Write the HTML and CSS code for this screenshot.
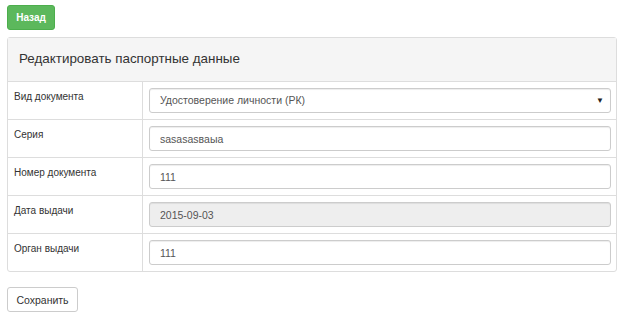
FILE: index.html
```html
<!DOCTYPE html>
<html lang="ru">
<head>
  <meta charset="UTF-8" />
  <title>Редактировать паспортные данные</title>
  <link rel="stylesheet" href="styles.css">
</head>
<body>
  <div class="page">
    <button class="btn btn-back">Назад</button>

    <div class="panel">
      <div class="panel-heading">Редактировать паспортные данные</div>
      <table class="form-table">
        <tr>
          <td class="label">Вид документа</td>
          <td>
            <div class="select">
              <span>Удостоверение личности (РК)</span>
              <span class="arrow">&#9660;</span>
            </div>
          </td>
        </tr>
        <tr>
          <td class="label">Серия</td>
          <td><input type="text" class="field" value="sasasasвaыa"></td>
        </tr>
        <tr>
          <td class="label">Номер документа</td>
          <td><input type="text" class="field" value="111"></td>
        </tr>
        <tr>
          <td class="label">Дата выдачи</td>
          <td><input type="text" class="field" value="2015-09-03" disabled></td>
        </tr>
        <tr>
          <td class="label">Орган выдачи</td>
          <td><input type="text" class="field" value="111"></td>
        </tr>
      </table>
    </div>

    <button class="btn btn-save">Сохранить</button>
  </div>
</body>
</html>
```

FILE: styles.css
```css
body {
  margin: 0;
  font-family: "Liberation Sans", Arial, sans-serif;
  color: #333;
  background: #fff;
}

.page {
  padding: 5px 6px 0 7px;
}

.btn {
  display: block;
  height: 25px;
  padding: 0;
  font-family: "Liberation Sans", Arial, sans-serif;
  font-size: 10.5px;
  border-radius: 3px;
  cursor: pointer;
}

.btn-back {
  width: 48px;
  background-color: #5cb85c;
  border: 1px solid #4cae4c;
  color: #fff;
  font-size: 10px;
  font-weight: bold;
}

.btn-save {
  width: 71px;
  margin-top: 15px;
  background-color: #fff;
  border: 1px solid #ccc;
  color: #333;
}

.panel {
  margin-top: 7px;
  border: 1px solid #ddd;
  border-radius: 3px;
  width: 608px;
}

.panel-heading {
  height: 43px;
  box-sizing: border-box;
  padding: 13px 11px 0;
  background-color: #f5f5f5;
  font-size: 13.4px;
  color: #333;
}

.form-table {
  width: 100%;
  border-collapse: collapse;
}

.form-table td {
  border-top: 1px solid #ddd;
  padding: 6px 5px 6px 6px;
  line-height: 13px;
  vertical-align: middle;
}

.form-table td.label {
  width: 123px;
  border-right: 1px solid #ddd;
  vertical-align: top;
  padding-top: 8px;
  font-size: 10px;
  color: #333;
}

.field,
.select {
  display: flex;
  align-items: center;
  justify-content: space-between;
  width: 100%;
  height: 25px;
  box-sizing: border-box;
  padding: 0 10px;
  border: 1px solid #ccc;
  border-radius: 3px;
  box-shadow: inset 0 1px 1px rgba(0,0,0,0.075);
  font-family: "Liberation Sans", Arial, sans-serif;
  font-size: 10.5px;
  color: #555;
  background: #fff;
}

.field:disabled {
  background-color: #eee;
  color: #555;
}

.select .arrow {
  font-size: 8px;
  color: #222;
  margin-right: -4px;
}
```
